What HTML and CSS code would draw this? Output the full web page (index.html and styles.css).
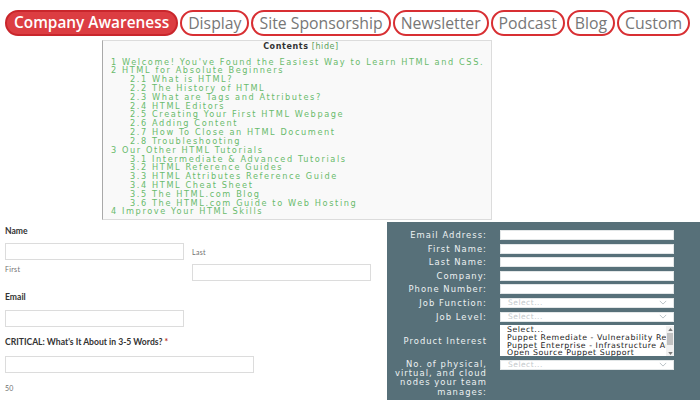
FILE: index.html
```html
<!DOCTYPE html>
<html>
<head>
<meta charset="utf-8">
<link rel="stylesheet" href="styles.css">
</head>
<body>
<nav class="tabs">
  <span class="tab active">Company Awareness</span>
  <span class="tab">Display</span>
  <span class="tab">Site Sponsorship</span>
  <span class="tab">Newsletter</span>
  <span class="tab">Podcast</span>
  <span class="tab">Blog</span>
  <span class="tab">Custom</span>
</nav>

<div class="toc">
  <div class="toc-title"><b>Contents</b> <span class="hide">[hide]</span></div>
  <ul class="toc-list">
    <li>1 Welcome! You've Found the Easiest Way to Learn HTML and CSS.</li>
    <li>2 HTML for Absolute Beginners</li>
    <li class="sub">2.1 What is HTML?</li>
    <li class="sub">2.2 The History of HTML</li>
    <li class="sub">2.3 What are Tags and Attributes?</li>
    <li class="sub">2.4 HTML Editors</li>
    <li class="sub">2.5 Creating Your First HTML Webpage</li>
    <li class="sub">2.6 Adding Content</li>
    <li class="sub">2.7 How To Close an HTML Document</li>
    <li class="sub">2.8 Troubleshooting</li>
    <li>3 Our Other HTML Tutorials</li>
    <li class="sub">3.1 Intermediate &amp; Advanced Tutorials</li>
    <li class="sub">3.2 HTML Reference Guides</li>
    <li class="sub">3.3 HTML Attributes Reference Guide</li>
    <li class="sub">3.4 HTML Cheat Sheet</li>
    <li class="sub">3.5 The HTML.com Blog</li>
    <li class="sub">3.6 The HTML.com Guide to Web Hosting</li>
    <li>4 Improve Your HTML Skills</li>
  </ul>
</div>

<div class="bottom">
  <form class="wpform">
    <div class="label">Name</div>
    <div class="name-row">
      <div class="col">
        <div class="field short"></div>
        <div class="sublabel first">First</div>
      </div>
      <div class="col col-last">
        <div class="sublabel">Last</div>
        <div class="field short last-field"></div>
      </div>
    </div>
    <div class="label gap-email">Email</div>
    <div class="field short"></div>
    <div class="label gap-crit">CRITICAL: What's It About in 3-5 Words? <span class="req">*</span></div>
    <div class="field wide"></div>
    <div class="sublabel count">50</div>
  </form>

  <div class="panel">
    <div class="grid">
      <div class="plabel">Email Address:</div><div class="pinput"></div>
      <div class="plabel">First Name:</div><div class="pinput"></div>
      <div class="plabel">Last Name:</div><div class="pinput"></div>
      <div class="plabel">Company:</div><div class="pinput"></div>
      <div class="plabel">Phone Number:</div><div class="pinput"></div>
      <div class="plabel">Job Function:</div><div class="pinput select"><span>Select...</span><svg class="chev" viewBox="0 0 10 6" width="8" height="5"><path d="M1 1 L5 5 L9 1" fill="none" stroke="#b8c0c4" stroke-width="1.2"/></svg></div>
      <div class="plabel">Job Level:</div><div class="pinput select"><span>Select...</span><svg class="chev" viewBox="0 0 10 6" width="8" height="5"><path d="M1 1 L5 5 L9 1" fill="none" stroke="#b8c0c4" stroke-width="1.2"/></svg></div>
      <div class="plabel mid">Product Interest</div>
      <div class="listbox">
        <div class="options">
          <div>Select...</div>
          <div>Puppet Remediate - Vulnerability Remediation</div>
          <div>Puppet Enterprise - Infrastructure Automation</div>
          <div>Open Source Puppet Support</div>
        </div>
        <div class="scroll">
          <svg viewBox="0 0 6 4" width="5" height="3"><path d="M0 4 L3 0 L6 4Z" fill="#777"/></svg>
          <div class="thumb"></div>
          <svg viewBox="0 0 6 4" width="5" height="3"><path d="M0 0 L3 4 L6 0Z" fill="#777"/></svg>
        </div>
      </div>
      <div class="plabel multi">No. of physical, virtual, and cloud nodes your team manages:</div>
      <div class="pinput select top"><span>Select...</span><svg class="chev" viewBox="0 0 10 6" width="8" height="5"><path d="M1 1 L5 5 L9 1" fill="none" stroke="#b8c0c4" stroke-width="1.2"/></svg></div>
    </div>
  </div>
</div>
</body>
</html>
```

FILE: styles.css
```css
* { box-sizing: border-box; }
html, body { margin: 0; padding: 0; }
body {
  width: 700px;
  height: 400px;
  overflow: hidden;
  background: #fff;
  font-family: "Open Sans", "Liberation Sans", sans-serif;
}

/* tabs */
.tabs {
  display: flex;
  gap: 2px;
  padding: 10px 0 0 5px;
  height: 40px;
}
.tab {
  height: 26px;
  line-height: 22px;
  border: 2px solid #d82f33;
  border-radius: 13px;
  padding: 0 6px;
  font-size: 15.8px;
  color: #777;
  white-space: nowrap;
}
.tab.active {
  background: #dc3d42;
  border-color: #c9262c;
  color: #fff;
  font-weight: 600;
  padding: 0 7px;
  font-size: 15.4px;
}

/* table of contents */
.toc {
  margin-left: 102px;
  width: 390px;
  height: 180px;
  background: #f9f9f9;
  border: 1px solid #dcdcdc;
  border-left-color: #a9a9a9;
  padding: 1px 0 0 8px;
  font-family: "DejaVu Sans", sans-serif;
}
.toc-title {
  text-align: center;
  font-size: 8px;
  line-height: 10px;
  color: #333;
  letter-spacing: 0.6px;
}
.toc-title .hide { color: #5aa05a; font-weight: normal; }
.toc-list {
  list-style: none;
  margin: 5.6px 0 0;
  padding: 0;
}
.toc-list li {
  font-size: 8.2px;
  line-height: 8.82px;
  color: #69bb6c;
  letter-spacing: 1.6px;
  white-space: nowrap;
}
.toc-list li.sub { padding-left: 19px; }

/* bottom area */
.bottom {
  display: flex;
  margin-top: 2px;
  height: 178px;
}
.wpform {
  width: 387px;
  padding: 3.5px 0 0 5px;
  font-family: Lato, "Liberation Sans", sans-serif;
  margin: 0;
}
.label {
  font-size: 8.6px;
  font-weight: 700;
  line-height: 11px;
  color: #333;
}
.req { color: #c0392b; }
.name-row {
  display: flex;
  margin-top: 6.5px;
}
.col { width: 179px; }
.col-last { margin-left: 8px; padding-top: 5px; }
.field {
  height: 17px;
  border: 1px solid #dcdcdc;
  background: #fff;
}
.field.short { width: 179px; }
.field.wide { width: 249px; margin-top: 7.5px; }
.sublabel {
  font-size: 7px;
  line-height: 9px;
  color: #707070;
  letter-spacing: 0.3px;
}
.sublabel.first { margin-top: 4.5px; }
.last-field { margin-top: 7px; }
.gap-email { margin-top: 11px; margin-bottom: 6.5px; }
.gap-crit { margin-top: 10.5px; }
.count { margin-top: 11.5px; }

/* right panel */
.panel {
  flex: 1;
  background: #577079;
  padding: 8px 0 0 0;
  font-family: "DejaVu Sans", sans-serif;
}
.grid {
  display: grid;
  grid-template-columns: 100px 174px;
  column-gap: 13px;
  row-gap: 3.6px;
}
.plabel {
  text-align: right;
  color: #eef2f3;
  font-size: 8.4px;
  line-height: 10px;
  letter-spacing: 1.05px;
  white-space: nowrap;
}
.plabel.mid { align-self: center; }
.plabel.multi {
  white-space: normal;
  line-height: 9.3px;
  padding-left: 0;
  margin-left: -6px;
}
.pinput {
  height: 10px;
  background: #fff;
  border: 1px solid #e3e7e8;
}
.select {
  display: flex;
  align-items: center;
  justify-content: space-between;
  padding: 0 6px 0 7px;
  font-size: 7.5px;
  color: #c4c9cc;
  letter-spacing: 0.5px;
}
.select.top { align-self: start; }
.listbox {
  height: 31px;
  background: #fff;
  display: flex;
  overflow: hidden;
  padding: 1px 0 0 7px;
}
.options {
  flex: 1;
  overflow: hidden;
  font-family: "DejaVu Sans", sans-serif;
  font-size: 7.8px;
  line-height: 7.7px;
  letter-spacing: 0.55px;
  color: #222;
  white-space: nowrap;
}
.scroll {
  width: 8px;
  background: #f1f1f1;
  display: flex;
  flex-direction: column;
  align-items: center;
  justify-content: space-between;
  padding: 2px 0 1px;
}
.thumb {
  width: 6px;
  height: 12px;
  background: #c1c1c1;
  margin-top: -6px;
}
```
